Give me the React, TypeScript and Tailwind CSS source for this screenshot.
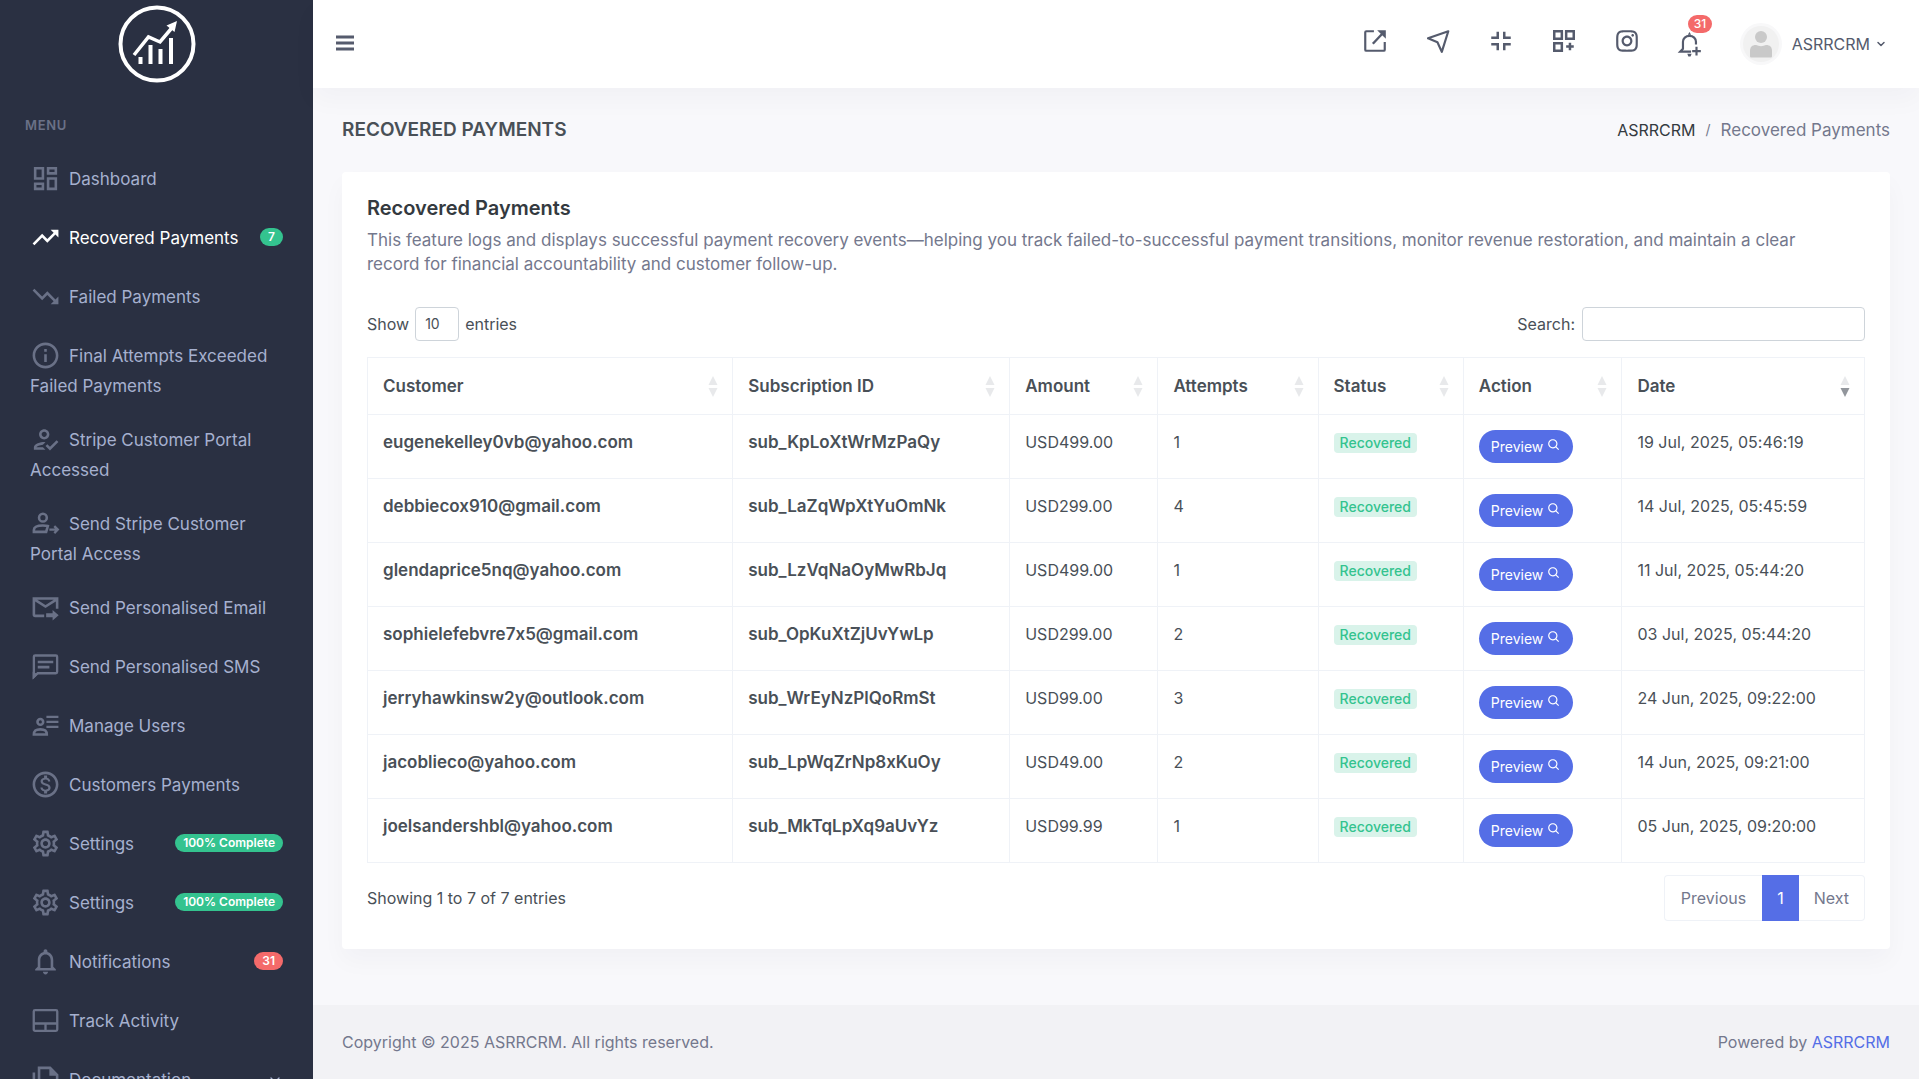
import type { ReactNode } from "react";
import { BiSearch } from "react-icons/bi";
import { FiChevronDown } from "react-icons/fi";
import {
  MdInfoOutline,
  MdNotificationsNone,
  MdOutlineDashboard,
  MdOutlineHowToReg,
  MdOutlineMonetizationOn,
  MdOutlineSettings,
  MdTrendingDown,
  MdTrendingUp,
} from "react-icons/md";
import { RiInstagramLine } from "react-icons/ri";

type IconProps = { className?: string; children?: ReactNode };

function Svg({ className, children }: IconProps) {
  return (
    <svg viewBox="0 0 24 24" fill="none" stroke="currentColor" strokeWidth="2" className={className} aria-hidden="true">
      {children}
    </svg>
  );
}

function UserArrowIcon({ className }: IconProps) {
  return (
    <Svg className={className}>
      <circle cx="10" cy="7.5" r="3" />
      <path d="M12.500 18.500H3V17c0-2.500 3.500-3.500 7-3.500 1.500 0 2.500.100 3.800.500z" />
      <path d="M15 16.700h6M18.800 14l2.700 2.700-2.700 2.700" strokeWidth="1.800" />
    </Svg>
  );
}

function MailForwardIcon({ className }: IconProps) {
  return (
    <Svg className={className}>
      <path d="M11 18.500H4a1 1 0 0 1-1-1V5h18v8M3 5.500l9 5.700 9-5.700" />
      <path d="M12.500 16.400h5V14l4.700 4-4.700 4v-2.400h-5z" fill="currentColor" stroke="none" />
    </Svg>
  );
}

function MessageIcon({ className }: IconProps) {
  return (
    <Svg className={className}>
      <path d="M3 4v16l3-2.800h14a1 1 0 0 0 1-1V4.500a1 1 0 0 0-1-1H4a1 1 0 0 0-1 1z" strokeWidth="1.800" />
      <path d="M2.100 16v6l4-4z" fill="currentColor" stroke="none" />
      <path d="M6 8.500h12M6 12.500h9" />
    </Svg>
  );
}

function UserListIcon({ className }: IconProps) {
  return (
    <Svg className={className}>
      <circle cx="8" cy="9.200" r="2.200" />
      <path d="M3 19c0-3 1.500-4 5-4s5 1 5 4z" />
      <path d="M12.700 5.300H22M12.700 9.200H22M12.700 13.100H22" strokeWidth="1.800" />
    </Svg>
  );
}

function LayoutIcon({ className }: IconProps) {
  return (
    <Svg className={className}>
      <rect x="2.900" y="4" width="18.200" height="16" rx="1" strokeWidth="1.800" />
      <path d="M3 14.300h18M12 14.300V20" strokeWidth="1.800" />
    </Svg>
  );
}

function DocumentsIcon({ className }: IconProps) {
  return (
    <Svg className={className}>
      <path d="M7 3h8.500L21 8.500V18H7z" />
      <path d="M15 3v6h6z" fill="currentColor" stroke="none" />
      <path d="M3 6.500V22h15M10 13h8" />
    </Svg>
  );
}

function ExternalIcon({ className }: IconProps) {
  return (
    <Svg className={className}>
      <path d="M11 3H4a1 1 0 0 0-1 1v16a1 1 0 0 0 1 1h16a1 1 0 0 0 1-1v-7" />
      <path d="M10 14.500 18.500 5.500" strokeWidth="2.200" />
      <path d="M14 2h8v8z" fill="currentColor" stroke="none" />
    </Svg>
  );
}

function SendIcon({ className }: IconProps) {
  return (
    <Svg className={className}>
      <path d="M21.500 3 2.800 9.500l8.700 3.700 4 8.800z" strokeLinejoin="round" />
    </Svg>
  );
}

function ExitFullscreenIcon({ className }: IconProps) {
  return (
    <Svg className={className}>
      <path d="M9 3.500V9H3M15 3.500V9h6M9 20.500V15H3M15 20.500V15h6" strokeWidth="2.300" />
    </Svg>
  );
}

function GridPlusIcon({ className }: IconProps) {
  return (
    <Svg className={className}>
      <path d="M3 3h7v7H3zM14 3h7v7h-7zM3 14h7v7H3z" strokeWidth="2.300" />
      <path d="M17.500 13.500v7M14 17h7" strokeWidth="2.300" />
    </Svg>
  );
}

function BellPlusIcon({ className }: IconProps) {
  return (
    <Svg className={className}>
      <path d="M13 19H3l2.500-2.500V10c0-3 2.500-5.500 6-5.500 3.600 0 6 2.500 6 5.500v2.500" />
      <path d="M10 3.500 11.500 1 13 3.500zM9.500 21h4l-1 2.500h-2z" fill="currentColor" stroke="none" />
      <path d="M18 14.500v8M14 18.500h8" />
    </Svg>
  );
}

const menu = [
  { label: "Dashboard", icon: MdOutlineDashboard },
  { label: "Recovered Payments", icon: MdTrendingUp, badge: "7", tone: "green", active: true },
  { label: "Failed Payments", icon: MdTrendingDown },
  { label: "Final Attempts Exceeded Failed Payments", icon: MdInfoOutline },
  { label: "Stripe Customer Portal Accessed", icon: MdOutlineHowToReg },
  { label: "Send Stripe Customer Portal Access", icon: UserArrowIcon },
  { label: "Send Personalised Email", icon: MailForwardIcon },
  { label: "Send Personalised SMS", icon: MessageIcon },
  { label: "Manage Users", icon: UserListIcon },
  { label: "Customers Payments", icon: MdOutlineMonetizationOn },
  { label: "Settings", icon: MdOutlineSettings, badge: "100% Complete", tone: "green" },
  { label: "Settings", icon: MdOutlineSettings, badge: "100% Complete", tone: "green" },
  { label: "Notifications", icon: MdNotificationsNone, badge: "31", tone: "red" },
  { label: "Track Activity", icon: LayoutIcon },
  { label: "Documentation", icon: DocumentsIcon, expandable: true },
];

const columns = [
  { label: "Customer", width: "w-[24.4%]" },
  { label: "Subscription ID", width: "w-[18.5%]" },
  { label: "Amount", width: "w-[9.9%]" },
  { label: "Attempts", width: "w-[10.7%]" },
  { label: "Status", width: "w-[9.7%]" },
  { label: "Action", width: "w-[10.6%]" },
  { label: "Date", width: "w-[16.2%]", sorted: true },
];

const payments = [
  { email: "eugenekelley0vb@yahoo.com", sub: "sub_KpLoXtWrMzPaQy", amount: "USD499.00", attempts: 1, date: "19 Jul, 2025, 05:46:19" },
  { email: "debbiecox910@gmail.com", sub: "sub_LaZqWpXtYuOmNk", amount: "USD299.00", attempts: 4, date: "14 Jul, 2025, 05:45:59" },
  { email: "glendaprice5nq@yahoo.com", sub: "sub_LzVqNaOyMwRbJq", amount: "USD499.00", attempts: 1, date: "11 Jul, 2025, 05:44:20" },
  { email: "sophielefebvre7x5@gmail.com", sub: "sub_OpKuXtZjUvYwLp", amount: "USD299.00", attempts: 2, date: "03 Jul, 2025, 05:44:20" },
  { email: "jerryhawkinsw2y@outlook.com", sub: "sub_WrEyNzPlQoRmSt", amount: "USD99.00", attempts: 3, date: "24 Jun, 2025, 09:22:00" },
  { email: "jacoblieco@yahoo.com", sub: "sub_LpWqZrNp8xKuOy", amount: "USD49.00", attempts: 2, date: "14 Jun, 2025, 09:21:00" },
  { email: "joelsandershbl@yahoo.com", sub: "sub_MkTqLpXq9aUvYz", amount: "USD99.99", attempts: 1, date: "05 Jun, 2025, 09:20:00" },
];

function Logo() {
  return (
    <svg viewBox="0 0 78 78" className="size-[78px]" fill="none" stroke="#fff" role="img" aria-label="ASRRCRM">
      <circle cx="39" cy="39" r="36.500" strokeWidth="4" />
      <path d="m16 50 14.500-18L42 37l13.500-16" strokeWidth="3.500" />
      <path d="m59 16-2.500 11-8-6.500z" fill="#fff" stroke="none" />
      <path d="M22.500 52v7M32.500 40v19M42.500 44v15M53 33v26" strokeWidth="4" />
    </svg>
  );
}

function Sidebar() {
  return (
    <aside className="flex w-[313px] shrink-0 flex-col bg-[#2a3042]">
      <a href="#" className="flex h-[88px] shrink-0 items-center justify-center">
        <Logo />
      </a>
      <nav>
        <p className="px-[25px] pt-[27px] pb-4 text-[13px] leading-5 font-semibold tracking-wider text-[#6a7187]">MENU</p>
        <ul>
          {menu.map(({ label, icon: Icon, badge, tone, active, expandable }, i) => (
            <li key={i}>
              <a
                href="#"
                className={`block px-[30px] pt-3 pb-[13px] text-[17px] leading-[25px] ${active ? "text-white" : "text-[#a6b0cf]"}`}
              >
                {badge && (
                  <span
                    className={`float-right mt-[6px] rounded-full px-2 text-xs leading-[18px] font-semibold text-white ${
                      tone === "red" ? "bg-[#f46a6a]" : "bg-[#34c38f]"
                    }`}
                  >
                    {badge}
                  </span>
                )}
                {expandable && <FiChevronDown className="float-right mt-2 size-4" />}
                <Icon className={`mr-2 mb-[3px] inline-block size-[31px] align-middle ${active ? "text-white" : "text-[#6a7187]"}`} />
                {label}
              </a>
            </li>
          ))}
        </ul>
      </nav>
    </aside>
  );
}

function Topbar() {
  const actions = [
    { name: "Open site", icon: ExternalIcon },
    { name: "Send", icon: SendIcon },
    { name: "Exit full screen", icon: ExitFullscreenIcon },
    { name: "Apps", icon: GridPlusIcon },
    { name: "Instagram", icon: RiInstagramLine },
  ];

  return (
    <header className="relative flex h-[88px] items-center justify-between bg-white pr-8 pl-[23px] text-[#555b6d] shadow-[0_12px_24px_rgba(18,38,63,0.03)]">
      <button type="button" aria-label="Toggle menu" className="mb-[2px]">
        <svg viewBox="0 0 18 18" className="size-[18px]" fill="currentColor">
          <path d="M0 1.500h18v3H0zM0 7.500h18v3H0zM0 13.500h18v3H0z" />
        </svg>
      </button>
      <div className="flex items-center">
        {actions.map(({ name, icon: Icon }) => (
          <button key={name} type="button" aria-label={name} className="mb-[6px] flex w-[63px] justify-center">
            <Icon className="size-[26px]" />
          </button>
        ))}
        <button type="button" aria-label="Notifications" className="relative flex w-[63px] justify-center">
          <BellPlusIcon className="size-[26px]" />
          <span className="absolute -top-4 left-[29px] rounded-full bg-[#f46a6a] px-[6px] text-xs leading-[18px] font-medium text-white">
            31
          </span>
        </button>
        <button type="button" className="ml-[18px] flex items-center gap-[10px] text-base">
          <svg viewBox="0 0 42 42" className="size-[42px]">
            <circle cx="21" cy="21" r="21" fill="#f8f8f9" />
            <circle cx="21" cy="21" r="18" fill="#f1f1f1" />
            <circle cx="21" cy="14" r="6" fill="#c9c9c9" />
            <path d="M10 33v-5c0-4 2-6 6-6 3 1.500 7 1.500 10 0 4 0 6 2 6 6v5c0 1-.5 1.500-1.500 1.500h-19c-1 0-1.500-.5-1.500-1.500z" fill="#c9c9c9" />
          </svg>
          <span className="flex items-center gap-[5px]">
            ASRRCRM
            <FiChevronDown className="size-3" strokeWidth={3} />
          </span>
        </button>
      </div>
    </header>
  );
}

function SortArrows({ sorted }: { sorted?: boolean }) {
  return (
    <svg viewBox="0 0 10 22" className="h-[22px] w-[10px]" aria-hidden="true">
      <path d="m5 1 4.500 9h-9z" fill="#e8e9eb" />
      <path d="m5 22-4.500-9h9z" fill={sorted ? "#92969c" : "#e8e9eb"} />
    </svg>
  );
}

function PaymentsTable() {
  return (
    <table className="mt-4 w-full table-fixed border-collapse text-left">
      <thead>
        <tr>
          {columns.map(({ label, width, sorted }) => (
            <th key={label} className={`border border-[#eff2f7] py-4 pr-[14px] pl-[15px] text-[17px] leading-6 font-semibold ${width}`}>
              <div className="flex items-center justify-between">
                {label}
                <SortArrows sorted={sorted} />
              </div>
            </th>
          ))}
        </tr>
      </thead>
      <tbody>
        {payments.map((p) => (
          <tr key={p.email} className="align-top leading-6 [&>td]:border [&>td]:border-[#eff2f7] [&>td]:px-[15px] [&>td]:py-[15px]">
            <td className="text-[17px] font-semibold">{p.email}</td>
            <td className="text-[17px] font-semibold">{p.sub}</td>
            <td>{p.amount}</td>
            <td>{p.attempts}</td>
            <td>
              <span className="mt-[3px] inline-block rounded bg-[#d9f3ea] px-[6px] align-top text-sm leading-5 font-medium text-[#34c38f]">
                Recovered
              </span>
            </td>
            <td>
              <button
                type="button"
                className="flex h-[33px] items-center gap-1 rounded-full bg-[#556ee6] px-3 text-sm text-white"
              >
                Preview
                <BiSearch className="mb-[3px] size-[14px]" />
              </button>
            </td>
            <td>{p.date}</td>
          </tr>
        ))}
      </tbody>
    </table>
  );
}

export default function App() {
  return (
    <div className="flex h-screen overflow-hidden bg-[#f8f8fb] font-['Inter',sans-serif] text-base text-[#495057] [font-feature-settings:'calt'_0]">
      <Sidebar />
      <div className="flex min-w-0 flex-1 flex-col">
        <Topbar />
        <main className="flex-1 px-[29px]">
          <div className="flex h-[84px] items-center justify-between">
            <h1 className="text-[19px] font-semibold">RECOVERED PAYMENTS</h1>
            <nav aria-label="Breadcrumb" className="flex leading-6 text-[#74788d]">
              <a href="#" className="text-[#343a40]">ASRRCRM</a>
              <span className="px-[10px] text-sm leading-6">/</span>
              <span className="text-[17px]">Recovered Payments</span>
            </nav>
          </div>

          <section className="rounded bg-white px-[25px] pt-6 pb-7 shadow-[0_12px_24px_rgba(18,38,63,0.03)]">
            <h2 className="text-xl leading-6 font-semibold text-[#343a40]">Recovered Payments</h2>
            <p className="mt-2 pr-10 text-[17px] leading-6 text-[#74788d]">
              This feature logs and displays successful payment recovery events—helping you track failed-to-successful payment
              transitions, monitor revenue restoration, and maintain a clear record for financial accountability and customer
              follow-up.
            </p>

            <div className="mt-[31px] flex items-center justify-between">
              <label className="flex items-center gap-[6px]">
                Show
                <select className="h-[34px] w-11 appearance-none rounded border border-[#ced4da] pl-[9px] text-sm">
                  <option>10</option>
                </select>
                entries
              </label>
              <label className="flex items-center gap-[7px]">
                Search:
                <input type="search" className="h-[34px] w-[283px] rounded border border-[#ced4da] px-2 text-sm" />
              </label>
            </div>

            <PaymentsTable />

            <div className="mt-3 flex items-center justify-between">
              <p>Showing 1 to 7 of 7 entries</p>
              <div className="flex h-[46px] text-[#74788d]">
                <button type="button" className="rounded-l border border-r-0 border-[#eff2f7] px-4">Previous</button>
                <button type="button" className="bg-[#556ee6] px-[15px] text-white">1</button>
                <button type="button" className="rounded-r border border-l-0 border-[#eff2f7] px-[15px]">Next</button>
              </div>
            </div>
          </section>
        </main>

        <footer className="flex h-[74px] items-center justify-between bg-[#f2f2f5] px-[29px] text-[#74788d]">
          <p>Copyright © 2025 ASRRCRM. All rights reserved.</p>
          <p>
            Powered by <a href="#" className="text-[#556ee6]">ASRRCRM</a>
          </p>
        </footer>
      </div>
    </div>
  );
}
